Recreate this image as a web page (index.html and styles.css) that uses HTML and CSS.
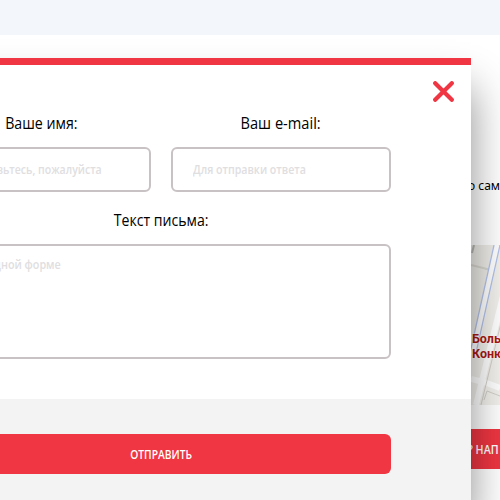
FILE: index.html
```
<!DOCTYPE html>
<html lang="ru">
<head>
<meta charset="utf-8">
<title>Написать письмо</title>
<link rel="stylesheet" href="styles.css">
</head>
<body>
<div class="page">
  <div class="band"></div>
  <p class="intro">о сам</p>
  <div class="map">
    <svg width="60" height="160" viewBox="0 0 60 160">
      <rect width="60" height="160" fill="#f3f1ec"/>
      <path d="M0 0H23L0 108Z" fill="#eeede8"/>
      <path d="M0 20L20 25M14 24h4" stroke="#d9d8d0" stroke-width="2" fill="none"/>
      <path d="M3 0L1 8" stroke="#b9b8b4" stroke-width="2"/>
      <path d="M26 0L2 110" stroke="#fff" stroke-width="7"/>
      <path d="M23 0L-1 108M29 0L5 108" stroke="#b4c3ea" stroke-width="1.3"/>
      <path d="M36 35L5 160M0 134L12 137M13 137L29 143" stroke="#fff" stroke-width="6" fill="none"/>
      <path d="M30 78L10 160M13 155L16 146L29 151" stroke="#d2cfc9" stroke-width="1" fill="none"/>
    </svg>
    <div class="place">Боль<br>Коню</div>
  </div>
  <div class="ask"><span class="fit ask-text">? НАП</span></div>
</div>
<div class="modal">
  <svg class="close" width="21" height="21" viewBox="0 0 21 21"><path d="M2.2 2.2L18.8 18.8M18.8 2.2L2.2 18.8" stroke="#ef3642" stroke-width="4.2" stroke-linecap="round"/></svg>
  <div class="form">
    <div class="row">
      <div class="col">
        <div class="label"><span class="fit name">Ваше имя:</span></div>
        <div class="field"><span class="fit hint hint-name">Представьтесь, пожалуйста</span></div>
      </div>
      <div class="col">
        <div class="label"><span class="fit mail">Ваш e-mail:</span></div>
        <div class="field"><span class="fit hint hint-mail">Для отправки ответа</span></div>
      </div>
    </div>
    <div class="label label-message"><span class="fit message">Текст письма:</span></div>
    <div class="field area"><span class="fit hint hint-message">В свободной форме</span></div>
  </div>
  <div class="footer"><div class="send"><span class="fit send-text">ОТПРАВИТЬ</span></div></div>
</div>
</body>
</html>
```
FILE: styles.css
```
* { box-sizing: border-box; }
body {
  margin: 0;
  height: 500px;
  position: relative;
  overflow: hidden;
  background: #fff;
  color: #000;
  font-family: "Open Sans", "Noto Sans", sans-serif;
}
.page { height: 500px; overflow: hidden; }
.band { height: 35px; background: #f3f7fb; }
.intro { margin: 140px 0 0 468px; height: 70px; font: 12px/22px "Noto Sans", sans-serif; white-space: nowrap; }
.map { position: relative; height: 160px; margin-left: 471px; overflow: hidden; }
.map svg { display: block; }
.place {
  position: absolute;
  left: 1px;
  top: 86px;
  font: bold 12.5px/15px Roboto, sans-serif;
  color: #a81816;
  text-shadow: 0 0 2px #fff, 0 0 2px #fff;
}
.ask { height: 40px; margin: 24px 0 0 380px; padding-left: 88px; background: #ef3642; color: #fff; line-height: 40px; font-size: 13px; }
.modal {
  position: absolute;
  left: -149px;
  top: 58px;
  width: 620px;
  height: 442px;
  background: #fff;
  border-top: 7px solid #ef3642;
  box-shadow: 0 30px 40px rgba(0, 0, 0, 0.45);
}
.close { position: absolute; right: 17px; top: 16px; }
.form { padding: 45px 80px 0; height: 334px; }
.row { display: flex; gap: 20px; }
.col { flex: 1; }
.label { height: 37px; line-height: 25px; font-size: 17px; text-align: center; }
.label-message { margin-top: 15px; }
.field { height: 45px; border: 2px solid #c8c2c4; border-radius: 6px; padding-left: 20px; line-height: 39px; }
.area { height: 115px; line-height: 35px; }
.fit { display: inline-block; white-space: nowrap; }
.hint { color: #e0dedf; font-size: 12.5px; font-weight: 600; transform-origin: left; }
.name { transform: scaleX(0.835); }
.mail { transform: scaleX(0.86); }
.message { transform: scaleX(0.83); }
.hint-name { transform: scaleX(0.843); }
.hint-mail { transform: scaleX(0.85); }
.hint-message { transform: scaleX(0.86); }
.footer { height: 101px; background: #f3f3f3; padding: 35px 80px 0; }
.send { height: 40px; border-radius: 6px; background: #ef3642; color: #fff; line-height: 40px; font-size: 13px; text-align: center; }
.send-text { transform: scaleX(0.79); font-weight: 600; }
.ask-text { transform: scaleX(0.82); transform-origin: left; font-weight: 600; }
```
